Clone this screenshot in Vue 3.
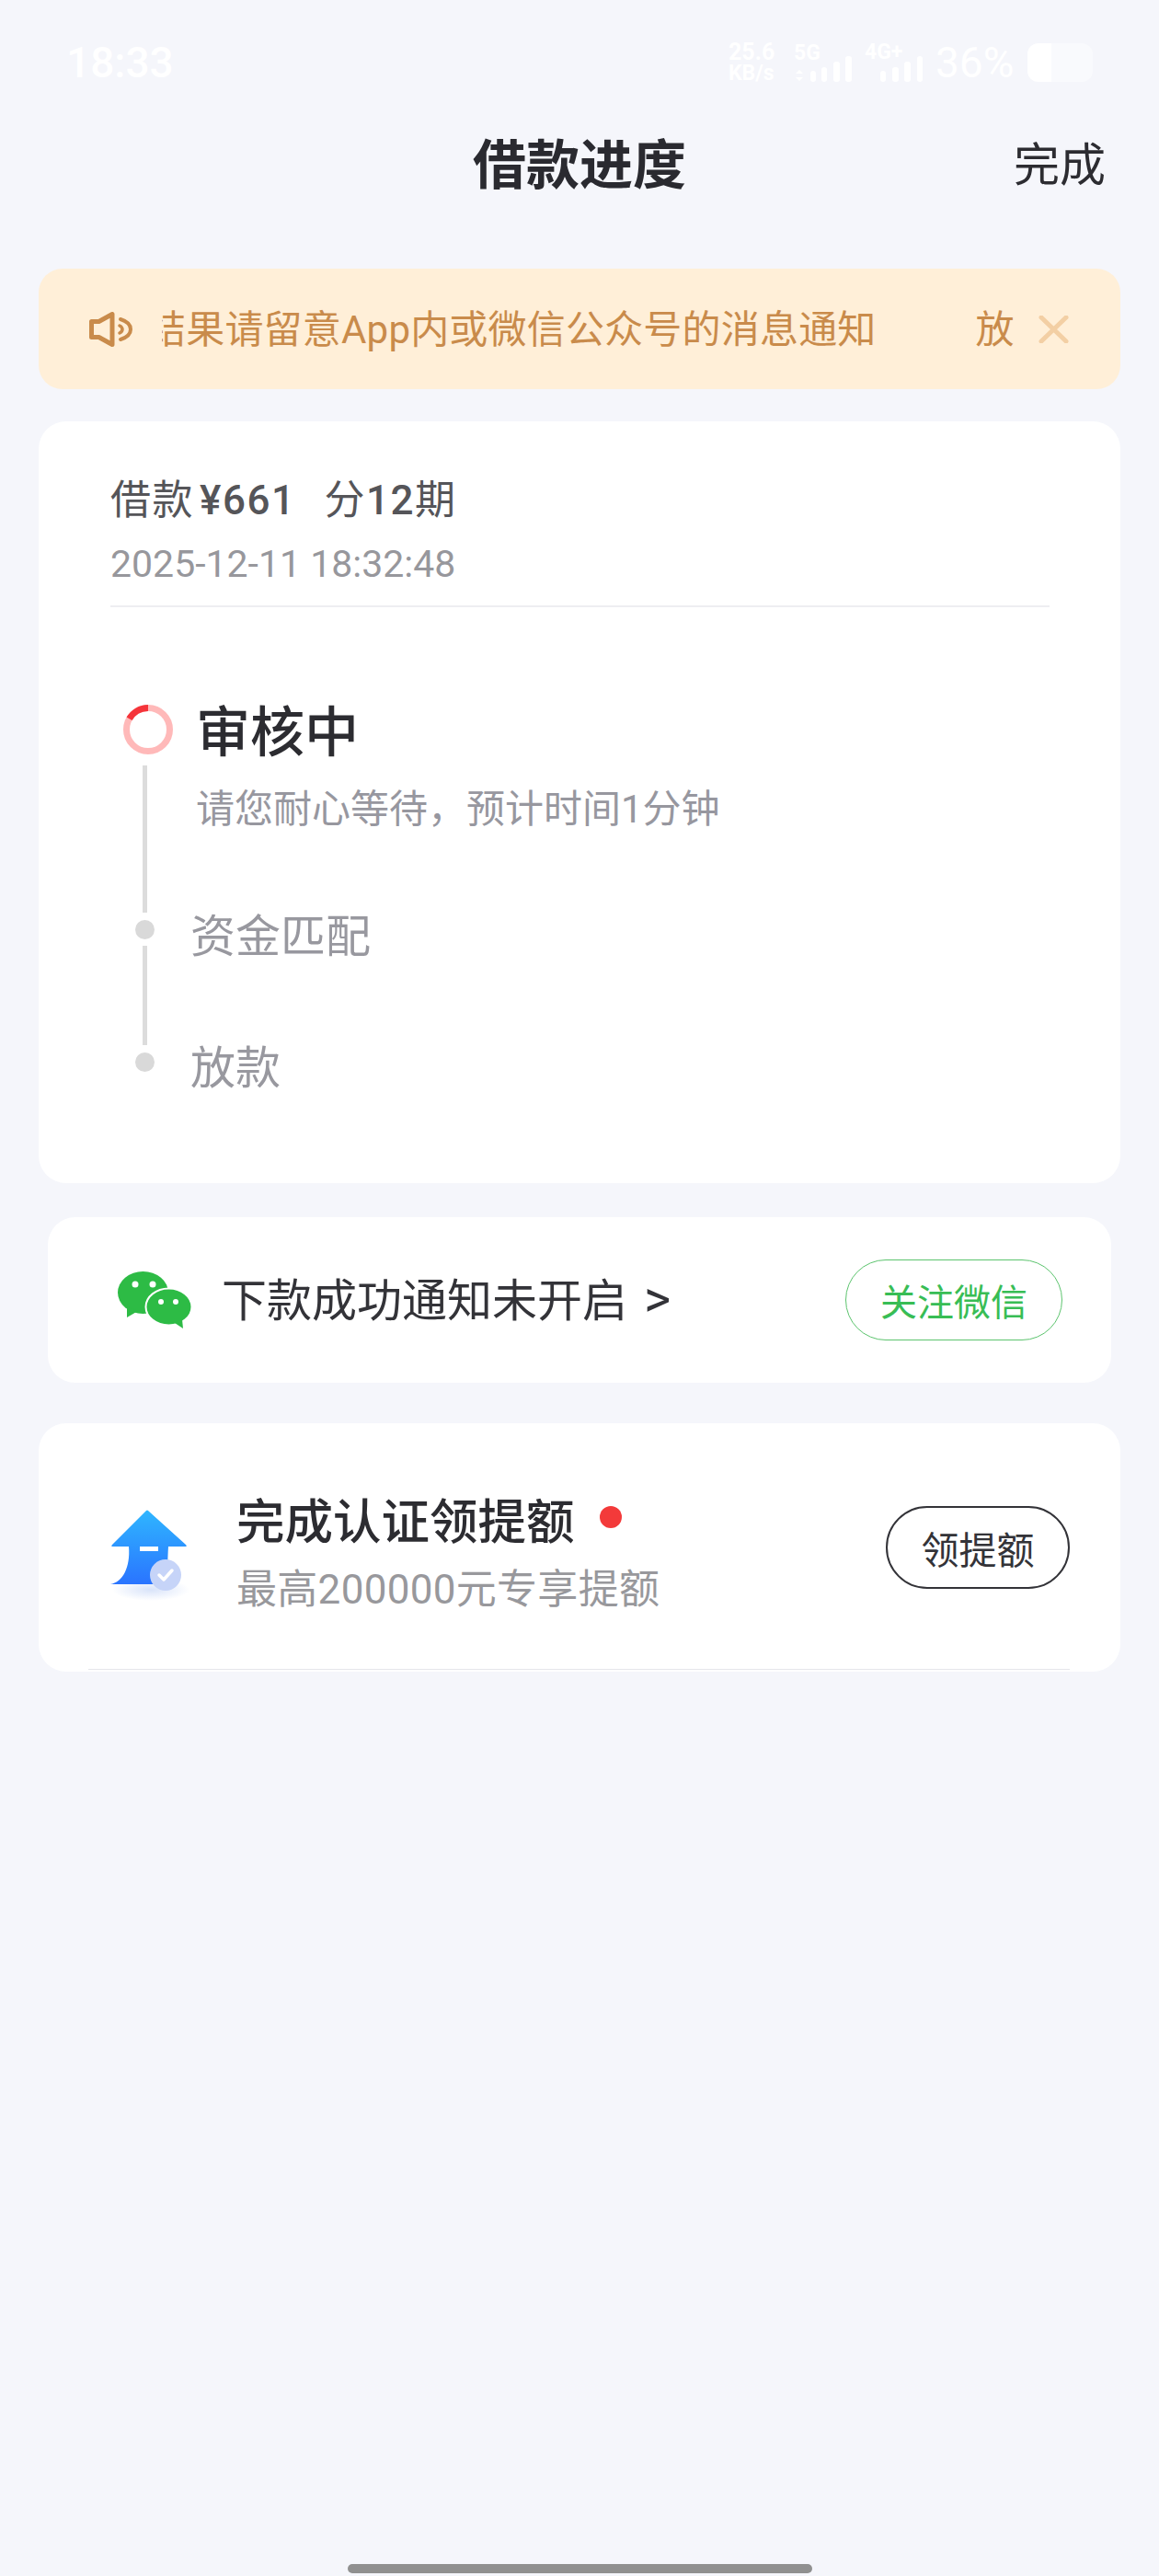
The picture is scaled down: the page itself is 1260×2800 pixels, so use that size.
<script setup>
const steps = [
  { name: '资金匹配', cls: 'row-match' },
  { name: '放款', cls: 'row-pay' }
]
</script>

<template>
  <div class="page">
    <!-- status bar -->
    <div class="status">
      <span class="time">18:33</span>
      <div class="status-right">
        <div class="speed">
          <span class="speed-num">25.6</span>
          <span>KB/s</span>
        </div>
        <svg class="signal" width="63" height="48" viewBox="0 -6 63 48">
          <text x="0" y="18" class="sig-text">5G</text>
          <path d="M6 29l4 4H2zM6 41l-4-4h8z" fill="#fff" />
          <rect x="18" y="30" width="6" height="12" rx="3" fill="#fff" />
          <rect x="30" y="26" width="6" height="16" rx="3" fill="#fff" />
          <rect x="43" y="20" width="7" height="22" rx="3" fill="#fff" />
          <rect x="56" y="14" width="7" height="28" rx="3" fill="#fff" />
        </svg>
        <svg class="signal" width="63" height="48" viewBox="0 -6 63 48">
          <text x="0" y="17" class="sig-text">4G+</text>
          <rect x="17" y="30" width="6" height="12" rx="3" fill="#fff" />
          <rect x="30" y="26" width="7" height="16" rx="3" fill="#fff" />
          <rect x="43" y="20" width="7" height="22" rx="3" fill="#fff" />
          <rect x="57" y="14" width="6" height="28" rx="3" fill="#fff" />
        </svg>
        <span class="percent">36%</span>
        <div class="battery">
          <div class="battery-fill"></div>
        </div>
      </div>
    </div>

    <!-- nav -->
    <div class="nav">
      <span></span>
      <h1 class="nav-title">借款进度</h1>
      <span class="nav-done">完成</span>
    </div>

    <!-- notice -->
    <div class="notice">
      <svg class="notice-icon" width="47" height="38" viewBox="0 0 47 38" fill="none" stroke="#c98b4b" stroke-linecap="round" stroke-linejoin="round">
        <path d="M2.500 10.500h8L25 2.500v33l-14.500-8h-8z" stroke-width="5" />
        <path d="M34 8c8 2.500 11 7 11 11s-3 8.500-11 11" stroke-width="4" />
        <path d="M33 15c2 1 3 2.500 3 4s-1 3-3 4" stroke-width="3.500" />
      </svg>
      <div class="marquee">
        <div class="marquee-inner">
          <span>结果请留意App内或微信公众号的消息通知</span>
          <span class="marquee-next">放</span>
        </div>
      </div>
      <svg class="notice-close" width="33" height="30" viewBox="0 0 33 30" fill="none" stroke="#f3cfa4" stroke-width="5" stroke-linecap="round">
        <path d="M3 2l27 26M30 2L3 28" />
      </svg>
    </div>

    <!-- progress card -->
    <div class="card progress">
      <div class="loan">借款<span class="num loan-amount">¥661</span><span class="loan-term">分<span class="num">12</span>期</span></div>
      <div class="loan-date">2025-12-11 18:32:48</div>
      <div class="divider"></div>

      <div class="timeline">
        <div class="step">
          <div class="rail">
            <svg class="spinner" width="54" height="54" viewBox="0 0 54 54" fill="none" stroke-width="7">
              <circle cx="27" cy="27" r="23.500" stroke="#ffb9b9" />
              <path d="M27 3.500A23.500 23.500 0 0 0 6.600 15.300" stroke="#f5343a" />
            </svg>
            <div class="rail-line first"></div>
          </div>
          <div class="step-text">
            <div class="step-title">审核中</div>
            <div class="step-desc">请您耐心等待，预计时间1分钟</div>
          </div>
        </div>
        <div v-for="(s, i) in steps" :key="s.name" class="step" :class="s.cls">
          <div class="rail">
            <div class="rail-dot"></div>
            <div v-if="i === 0" class="rail-line second"></div>
          </div>
          <div class="step-name">{{ s.name }}</div>
        </div>
      </div>
    </div>

    <!-- wechat notification -->
    <div class="card wechat">
      <svg class="wechat-icon" width="80" height="62" viewBox="0 0 80 62">
        <ellipse cx="27.500" cy="23" rx="27.500" ry="23" fill="#2dbb45" />
        <path d="M10 38l0 12 12-7z" fill="#2dbb45" />
        <circle cx="19" cy="14" r="3.500" fill="#fff" />
        <circle cx="38" cy="14" r="3.500" fill="#fff" />
        <ellipse cx="55.500" cy="38.500" rx="25" ry="20" fill="#2dbb45" stroke="#fff" stroke-width="2" />
        <path d="M62 56l9 6-1-10z" fill="#2dbb45" />
        <circle cx="47" cy="33" r="3" fill="#fff" />
        <circle cx="63" cy="33" r="3" fill="#fff" />
      </svg>
      <span class="wechat-text">下款成功通知未开启<span class="wechat-arrow">&gt;</span></span>
      <button class="btn-follow">关注微信</button>
    </div>

    <!-- credit limit -->
    <div class="card limit">
      <svg class="limit-icon" width="100" height="112" viewBox="0 0 100 112">
        <defs>
          <linearGradient id="arrowFill" x1="0" y1="0" x2="0" y2="1">
            <stop offset="0" stop-color="#2fb6ff" />
            <stop offset="1" stop-color="#2a74ff" />
          </linearGradient>
          <radialGradient id="arrowShade">
            <stop offset="0" stop-color="#b9cdf5" stop-opacity="0.55" />
            <stop offset="1" stop-color="#b9cdf5" stop-opacity="0" />
          </radialGradient>
        </defs>
        <ellipse cx="46" cy="96" rx="42" ry="12" fill="url(#arrowShade)" />
        <path d="M43 10l41 37q2 2-1 2H65c-1 14 0 26-4 35-2 5-8 6-16 6H2C15 88 24 72 22 49H5q-3 0-1-2L41 10q1-1 2 0z" fill="url(#arrowFill)" />
        <rect x="34" y="49" width="20" height="5" fill="#fff" />
        <circle cx="62" cy="80" r="17" fill="#c6d4f8" />
        <path d="M55 80l5 5 9-10" fill="none" stroke="#fff" stroke-width="3.500" stroke-linecap="round" stroke-linejoin="round" />
      </svg>
      <div class="limit-text">
        <div class="limit-title">
          <span>完成认证领提额</span>
          <i class="red-dot"></i>
        </div>
        <div class="limit-desc">最高200000元专享提额</div>
      </div>
      <button class="btn-claim">领提额</button>
    </div>

    <div class="home-bar"></div>
  </div>
</template>

<style>
body {
  background: #f5f6fb;
}
</style>

<style scoped>
.page {
  width: 1260px;
  min-height: 2800px;
  display: flex;
  flex-direction: column;
  background: #f5f6fb;
  font-family: Roboto, "Noto Sans CJK SC", sans-serif;
  color: #2c2c31;
}

.status {
  height: 136px;
  padding: 0 72px;
  box-sizing: border-box;
  display: flex;
  align-items: center;
  color: #fff;
}

.time {
  font-size: 46px;
  line-height: 50px;
  font-weight: 500;
}

.status-right {
  margin-left: auto;
  display: flex;
  align-items: center;
}

.speed {
  display: flex;
  flex-direction: column;
  width: 52px;
  font-size: 23px;
  line-height: 23px;
  font-weight: 700;
  margin-right: 19px;
}

.speed-num {
  font-size: 25px;
}

.signal {
  margin-right: 14px;
  margin-bottom: 6px;
}

.sig-text {
  font-size: 23px;
  font-weight: 700;
  fill: #fff;
}

.percent {
  font-size: 46px;
  line-height: 50px;
  width: 86px;
  margin-right: 14px;
}

.battery {
  width: 71px;
  height: 42px;
  border-radius: 12px;
  background: rgba(255, 255, 255, 0.45);
  overflow: hidden;
}

.battery-fill {
  width: 36%;
  height: 100%;
  background: #fff;
}

.nav {
  height: 88px;
  padding: 0 58px;
  display: grid;
  grid-template-columns: 1fr auto 1fr;
  align-items: center;
}

.nav-title {
  margin: 0;
  font-size: 58px;
  line-height: 88px;
  font-weight: 700;
  color: #2a2a30;
}

.nav-done {
  justify-self: end;
  font-size: 50px;
  line-height: 88px;
}

.notice {
  margin: 68px 42px 0;
  height: 131px;
  padding-left: 55px;
  display: flex;
  align-items: center;
  background: #ffefd8;
  border-radius: 26px;
}

.notice-icon {
  flex-shrink: 0;
  margin-right: 32px;
}

.marquee {
  width: 930px;
  padding-top: 3px;
  overflow: hidden;
  font-size: 42px;
  line-height: 56px;
  color: #c98b4b;
}

.marquee-inner {
  margin-left: -16px;
  white-space: nowrap;
  letter-spacing: 0.200px;
}

.marquee-next {
  margin-left: 108px;
}

.notice-close {
  flex-shrink: 0;
  margin-left: 23px;
}

.card {
  background: #fff;
  border-radius: 30px;
}

.progress {
  margin: 35px 42px 0;
  padding: 62px 77px 102px 78px;
}

.loan {
  font-size: 44px;
  line-height: 48px;
  letter-spacing: 1.500px;
  color: #555559;
}

.num {
  font-weight: 500;
}

.loan-amount {
  margin-left: 6px;
}

.loan-term {
  margin-left: 31px;
}

.loan-date {
  margin-top: 23px;
  font-size: 41px;
  line-height: 44px;
  color: #97979c;
}

.divider {
  margin-top: 23px;
  height: 2px;
  background: #eeeef1;
}

.timeline {
  margin-top: 106px;
  margin-left: 14px;
}

.step {
  display: flex;
}

.rail {
  width: 54px;
  flex-shrink: 0;
  display: flex;
  flex-direction: column;
  align-items: center;
}

.rail-line {
  width: 5px;
  margin-right: 8px;
  background: #dcdcdc;
}

.rail-line.first {
  margin-top: 12px;
  height: 160px;
}

.rail-line.second {
  margin-top: 7px;
  height: 108px;
}

.rail-dot {
  width: 21px;
  height: 21px;
  margin-top: 8px;
  margin-right: 8px;
  border-radius: 50%;
  background: #d9d9d9;
}

.step-text {
  margin-left: 25px;
}

.step-title {
  margin-top: 1px;
  font-size: 59px;
  line-height: 60px;
  font-weight: 500;
  color: #2c2c31;
}

.step-desc {
  margin-top: 28px;
  font-size: 42px;
  line-height: 50px;
  color: #97979f;
}

.step-name {
  margin-left: 19px;
  margin-top: -3px;
  font-size: 49px;
  line-height: 60px;
  color: #98989f;
  height: 52px;
}

.row-pay .step-name {
  margin-top: -4px;
}

.wechat {
  margin: 37px 52px 0;
  height: 180px;
  padding: 0 53px 0 76px;
  display: flex;
  align-items: center;
}

.wechat-icon {
  flex-shrink: 0;
  margin-right: 33px;
}

.wechat-text {
  font-size: 49px;
  line-height: 60px;
  color: #333338;
}

.wechat-arrow {
  margin-left: 18px;
  font-size: 56px;
}

.btn-follow {
  margin-left: auto;
  width: 236px;
  height: 88px;
  padding: 0;
  border: 1.500px solid #5cc46e;
  border-radius: 44px;
  background: #fff;
  color: #38bd55;
  font-family: inherit;
  font-size: 40px;
}

.limit {
  position: relative;
  margin: 44px 42px 0;
  height: 270px;
  padding: 0 55px 0 76px;
  display: flex;
  align-items: center;
}

.limit::after {
  content: "";
  position: absolute;
  left: 54px;
  right: 55px;
  bottom: 2px;
  height: 1px;
  background: #e6e6ea;
}

.limit-icon {
  flex-shrink: 0;
  margin-top: 12px;
  margin-right: 39px;
}

.limit-text {
  padding-top: 13px;
}

.limit-title {
  display: flex;
  align-items: center;
  font-size: 52.500px;
  line-height: 60px;
  font-weight: 500;
  color: #2c2c31;
}

.red-dot {
  width: 24px;
  height: 24px;
  margin-left: 27px;
  margin-top: -12px;
  border-radius: 50%;
  background: #f33a3a;
}

.limit-desc {
  margin-top: 18px;
  font-size: 44px;
  line-height: 50px;
  letter-spacing: 0.300px;
  color: #98989c;
}

.btn-claim {
  margin-left: auto;
  width: 200px;
  height: 90px;
  padding: 0;
  border: 2px solid #333338;
  border-radius: 45px;
  background: #fff;
  color: #333338;
  font-family: inherit;
  font-size: 41px;
}

.home-bar {
  margin: auto auto 3px;
  width: 505px;
  height: 10px;
  border-radius: 5px;
  background: #909090;
}
</style>
